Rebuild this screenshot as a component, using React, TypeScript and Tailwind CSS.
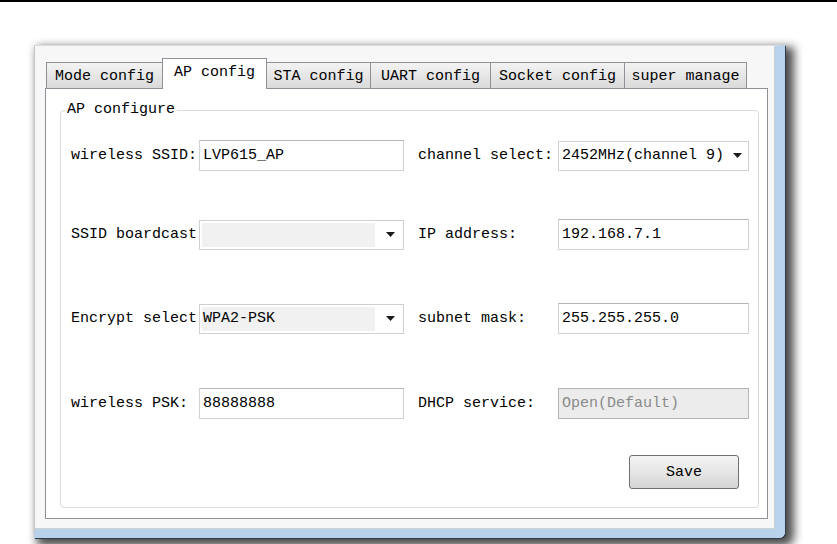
import React from "react";

const mono = "font-['Liberation_Mono','DejaVu_Sans_Mono',monospace]";

function Arrow() {
  return (
    <svg width="9" height="5" viewBox="0 0 9 5" className="shrink-0">
      <path d="M0 0h9L4.5 5z" fill="#1a1a1a" />
    </svg>
  );
}

function Tab({ label, width, active }: { label: string; width: string; active?: boolean }) {
  if (active) {
    return (
      <div
        className={`${width} -ml-px -mb-px h-[31px] relative z-10 bg-white border border-b-0 border-[#8e9298] flex items-start justify-center pt-[5px] text-[15px] leading-[18px] text-black`}
      >
        {label}
      </div>
    );
  }
  return (
    <div
      className={`${width} -ml-px h-[26px] bg-gradient-to-b from-[#f3f3f3] to-[#dadada] border border-b-0 border-[#8e9298] flex items-center justify-center pt-[2px] text-[15px] leading-[18px] text-black`}
    >
      {label}
    </div>
  );
}

function TextBox({ value, width, disabled }: { value: string; width: string; disabled?: boolean }) {
  return (
    <div
      className={`${width} h-[31px] border flex items-center pl-[3px] text-[15px] leading-none whitespace-nowrap ${
        disabled
          ? "bg-[#ececec] border-[#b4b4b4] text-[#8a8a8a]"
          : "bg-white border-[#d2d2d2] border-t-[#b4b4b4] text-black"
      }`}
    >
      {value}
    </div>
  );
}

function Combo({ value, width, filled }: { value: string; width: string; filled?: boolean }) {
  return (
    <div className={`${width} h-[30px] border border-[#d0d0d0] bg-white flex items-center text-[15px] leading-none text-black`}>
      <div
        className={`flex-1 flex items-center overflow-hidden whitespace-nowrap ${
          filled ? "bg-[#f1f1f1] h-[24px] ml-[2px] mr-[2px] pl-[1px]" : "h-full pl-[3px]"
        }`}
      >
        {value}
      </div>
      <div className={`${filled ? "w-[26px]" : "w-[22px]"} flex justify-center`}>
        <Arrow />
      </div>
    </div>
  );
}

function Row({
  leftLabel,
  left,
  rightLabel,
  right,
  className,
}: {
  leftLabel: string;
  left: React.ReactNode;
  rightLabel: string;
  right: React.ReactNode;
  className?: string;
}) {
  return (
    <div className={`flex items-center h-[31px] ${className ?? ""}`}>
      <div className="w-[128px] text-[15px] leading-none text-black whitespace-nowrap">{leftLabel}</div>
      {left}
      <div className="w-[140px] ml-[14px] text-[15px] leading-none text-black whitespace-nowrap">{rightLabel}</div>
      {right}
    </div>
  );
}

export default function App() {
  return (
    <div className={`w-[837px] h-[544px] bg-white overflow-hidden ${mono}`}>
      <div className="h-[2px] bg-black" />

      <div className="mt-[43px] ml-[34px] w-[751px] h-[493px] border-l border-t border-l-[#c4c4c4] border-t-[#dcdcdc] border-r-[10px] border-b-[9px] border-r-[#b9d2ec] border-b-[#b9d2ec] rounded-br-[6px] shadow-[1px_1px_0_#2e3b47,6px_5px_10px_3px_rgba(0,0,0,0.7)]">
        <div className="h-full bg-[#f7f7f7] border-r border-b border-[#cfd3d8] pl-[10px] pt-[12px]">
          {/* tabs */}
          <div className="flex items-end h-[30px] pl-[2px]">
            <Tab label="Mode config" width="w-[117px]" />
            <Tab label="AP config" width="w-[105px]" active />
            <Tab label="STA config" width="w-[105px]" />
            <Tab label="UART config" width="w-[121px]" />
            <Tab label="Socket config" width="w-[135px]" />
            <Tab label="super manage" width="w-[123px]" />
          </div>

          {/* tab page */}
          <div className="w-[723px] h-[431px] bg-white border border-[#8e9298] pl-[14px] pt-[12px]">
            <fieldset className="w-[699px] h-[407px] border border-[#d6dbe0] rounded-[4px]">
              <legend className="ml-[4px] px-[2px] text-[15px] leading-[18px] text-black">AP configure</legend>
              <div className="pl-[10px] pt-[21px]">
                <Row
                  leftLabel="wireless SSID:"
                  left={<TextBox value="LVP615_AP" width="w-[205px]" />}
                  rightLabel="channel select:"
                  right={<Combo value="2452MHz(channel 9)" width="w-[191px]" />}
                />
                <Row
                  className="mt-[48px]"
                  leftLabel="SSID boardcast"
                  left={<Combo value="" width="w-[205px]" filled />}
                  rightLabel="IP address:"
                  right={<TextBox value="192.168.7.1" width="w-[191px]" />}
                />
                <Row
                  className="mt-[53px]"
                  leftLabel="Encrypt select"
                  left={<Combo value="WPA2-PSK" width="w-[205px]" filled />}
                  rightLabel="subnet mask:"
                  right={<TextBox value="255.255.255.0" width="w-[191px]" />}
                />
                <Row
                  className="mt-[54px]"
                  leftLabel="wireless PSK:"
                  left={<TextBox value="88888888" width="w-[205px]" />}
                  rightLabel="DHCP service:"
                  right={<TextBox value="Open(Default)" width="w-[191px]" disabled />}
                />
                <div className="flex justify-end mt-[36px] pr-[19px]">
                  <button className="w-[110px] h-[34px] rounded-[3px] border border-[#707070] bg-gradient-to-b from-[#f4f4f4] via-[#e6e6e6] to-[#d4d4d4] text-[15px] leading-none text-black">
                    Save
                  </button>
                </div>
              </div>
            </fieldset>
          </div>
        </div>
      </div>
    </div>
  );
}
